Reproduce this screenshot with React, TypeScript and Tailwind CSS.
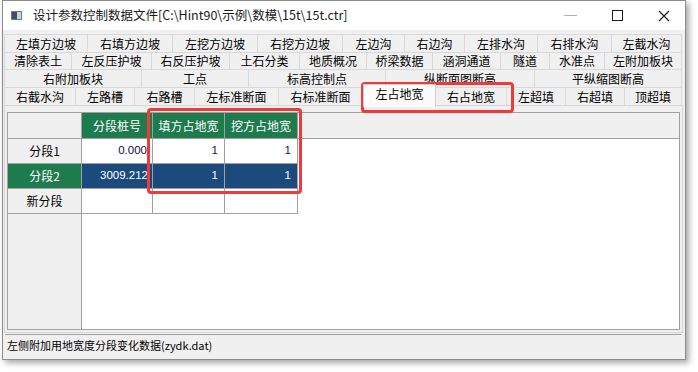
import React from "react";

const FONT = '"Noto Sans CJK SC", "Noto Sans", sans-serif';
const NUM = '"Liberation Sans", "Noto Sans CJK SC", sans-serif';

type Tab = [string, number];

const rows: { h: string; tabs: Tab[] }[] = [
  {
    h: "h-[18px]",
    tabs: [
      ["左填方边坡", 84], ["右填方边坡", 85], ["左挖方边坡", 85], ["右挖方边坡", 85],
      ["左边沟", 62], ["右边沟", 60], ["左排水沟", 73], ["右排水沟", 74], ["左截水沟", 70],
    ],
  },
  {
    h: "h-[17px]",
    tabs: [
      ["清除表土", 68], ["左反压护坡", 80], ["右反压护坡", 78], ["土石分类", 70], ["地质概况", 67],
      ["桥梁数据", 66], ["涵洞通道", 68], ["隧道", 49], ["水准点", 55], ["左附加板块", 77],
    ],
  },
  {
    h: "h-[18px]",
    tabs: [
      ["右附加板块", 138], ["工点", 107], ["标高控制点", 137], ["纵断面图断高", 149], ["平纵缩图断高", 147],
    ],
  },
  {
    h: "h-[18px]",
    tabs: [
      ["右截水沟", 72], ["左路槽", 59], ["右路槽", 60], ["左标准断面", 84], ["右标准断面", 84],
      ["左占地宽", 73], ["右占地宽", 71], ["左超填", 59], ["右超填", 59], ["顶超填", 57],
    ],
  },
];

function TabRow({ h, tabs }: { h: string; tabs: Tab[] }) {
  return (
    <div className={`flex ${h} relative`}>
      {tabs.map(([label, w], i) => {
        const selected = label === "左占地宽";
        return (
          <div
            key={label}
            style={{ width: w }}
            className={
              selected
                ? "relative z-10 -mt-[3px] h-[23px] flex items-start justify-center pt-[3px] bg-[#fbfbfb] border-t border-l border-r border-[#cfcfcf] text-[12px] leading-none text-black"
                : `flex items-center justify-center bg-[#f0f0f0] border-t border-r border-[#d9d9d9] ${i === 0 ? "border-l" : ""} text-[12px] leading-none text-black`
            }
          >
            {label}
          </div>
        );
      })}
    </div>
  );
}

export default function App() {
  const cellB = "border-r border-b border-[#a0a0a0]";
  return (
    <div className="relative w-[698px] h-[372px] bg-white overflow-hidden" style={{ fontFamily: FONT }}>
      {/* window */}
      <div className="ml-[2px] w-[684px] h-[360px] border border-[#8a8a8a] bg-[#f0f0f0] flex flex-col shadow-[3px_3px_6px_rgba(0,0,0,0.35)]">
        {/* title bar */}
        <div className="h-[29px] bg-white flex items-center shrink-0">
          <div className="ml-[8px] w-[11px] h-[9px] flex border border-[#6b7b8a]">
            <div className="w-[5px] h-full bg-[#3d4f63]" />
            <div className="flex-1 h-full bg-[#c9d2da]" />
          </div>
          <div className="ml-[11px] text-[12.5px] leading-none text-[#1a1a1a]">
            设计参数控制数据文件[C:\Hint90\示例\数模\15t\15t.ctr]
          </div>
          <div className="flex-1" />
          <div className="w-[13px] h-px bg-[#b0b0b0] mr-[35px]" />
          <div className="w-[11px] h-[11px] border border-[#1a1a1a] mr-[35px]" />
          <svg width="12" height="12" viewBox="0 0 12 12" className="mr-[15px]">
            <path d="M1 1 L11 11 M11 1 L1 11" stroke="#1a1a1a" strokeWidth="1.1" />
          </svg>
        </div>

        {/* body */}
        <div className="flex-1 flex flex-col pt-[4px] pl-[1px]">
          {rows.map((r, i) => (
            <TabRow key={i} h={r.h} tabs={r.tabs} />
          ))}

          {/* panel */}
          <div className="w-[679px] h-[228px] border border-[#d6d6d6] bg-[#f0f0f0]">
            <div className="mt-[6px] ml-[2px] w-[673px] h-[218px] border border-[#a0a0a0] bg-white flex flex-col text-[12px] leading-none">
              {/* header */}
              <div className="flex h-[26px] bg-[#f0f0f0] border-b border-[#a0a0a0]">
                <div className="w-[74px] border-r border-[#a0a0a0]" />
                <div className="w-[71px] border-r border-[#a0a0a0] bg-[#1e7b4e] text-white flex items-center justify-center">分段桩号</div>
                <div className="w-[72px] border-r border-[#a0a0a0] bg-[#1e7b4e] text-white flex items-center justify-center">填方占地宽</div>
                <div className="w-[73px] border-r border-[#a0a0a0] bg-[#1e7b4e] text-white flex items-center justify-center">挖方占地宽</div>
                <div className="flex-1" />
              </div>
              {/* row 1 */}
              <div className="flex h-[25px]">
                <div className={`w-[74px] ${cellB} bg-[#f0f0f0] flex items-center justify-center text-black`}>分段1</div>
                <div className={`w-[71px] ${cellB} flex items-center justify-end pr-[5px] text-[#101040] text-[11.5px]`} style={{ fontFamily: NUM }}>0.000</div>
                <div className={`w-[72px] ${cellB} flex items-center justify-end pr-[6px] text-[#14145a] text-[11.5px]`} style={{ fontFamily: NUM }}>1</div>
                <div className={`w-[73px] ${cellB} flex items-center justify-end pr-[6px] text-[#14145a] text-[11.5px]`} style={{ fontFamily: NUM }}>1</div>
              </div>
              {/* row 2 selected */}
              <div className="flex h-[25px]">
                <div className={`w-[74px] ${cellB} bg-[#1e7b4e] flex items-center justify-center text-white`}>分段2</div>
                <div className={`w-[71px] ${cellB} bg-[#1c4a7c] flex items-center justify-end pr-[4px] text-white text-[11.5px]`} style={{ fontFamily: NUM }}>3009.212</div>
                <div className={`w-[72px] ${cellB} bg-[#1c4a7c] flex items-center justify-end pr-[6px] text-white text-[11.5px]`} style={{ fontFamily: NUM }}>1</div>
                <div className={`w-[73px] ${cellB} bg-[#1c4a7c] flex items-center justify-end pr-[6px] text-white text-[11.5px]`} style={{ fontFamily: NUM }}>1</div>
              </div>
              {/* row 3 new */}
              <div className="flex h-[25px]">
                <div className={`w-[74px] ${cellB} bg-[#f0f0f0] flex items-center justify-center text-black`}>新分段</div>
                <div className={`w-[71px] ${cellB}`} />
                <div className={`w-[72px] ${cellB}`} />
                <div className={`w-[73px] ${cellB}`} />
              </div>
              {/* filler */}
              <div className="flex flex-1">
                <div className="w-[74px] border-r border-[#a0a0a0] bg-[#f0f0f0]" />
              </div>
            </div>
          </div>

          {/* status bar */}
          <div className="mt-[1px] ml-[1px] w-[676px] h-[22px] border-t border-[#a0a0a0] flex items-center pl-[2px] text-[11px] leading-none text-black">
            左侧附加用地宽度分段变化数据(zydk.dat)
          </div>
        </div>
      </div>

      {/* red annotation boxes */}
      <div className="absolute left-[361px] top-[82px] w-[153px] h-[31px] border-[3px] border-[#f03a3a] rounded-[4px]" />
      <div className="absolute left-[147px] top-[108px] w-[155px] h-[86px] border-[3px] border-[#f03a3a] rounded-[4px]" />
    </div>
  );
}
